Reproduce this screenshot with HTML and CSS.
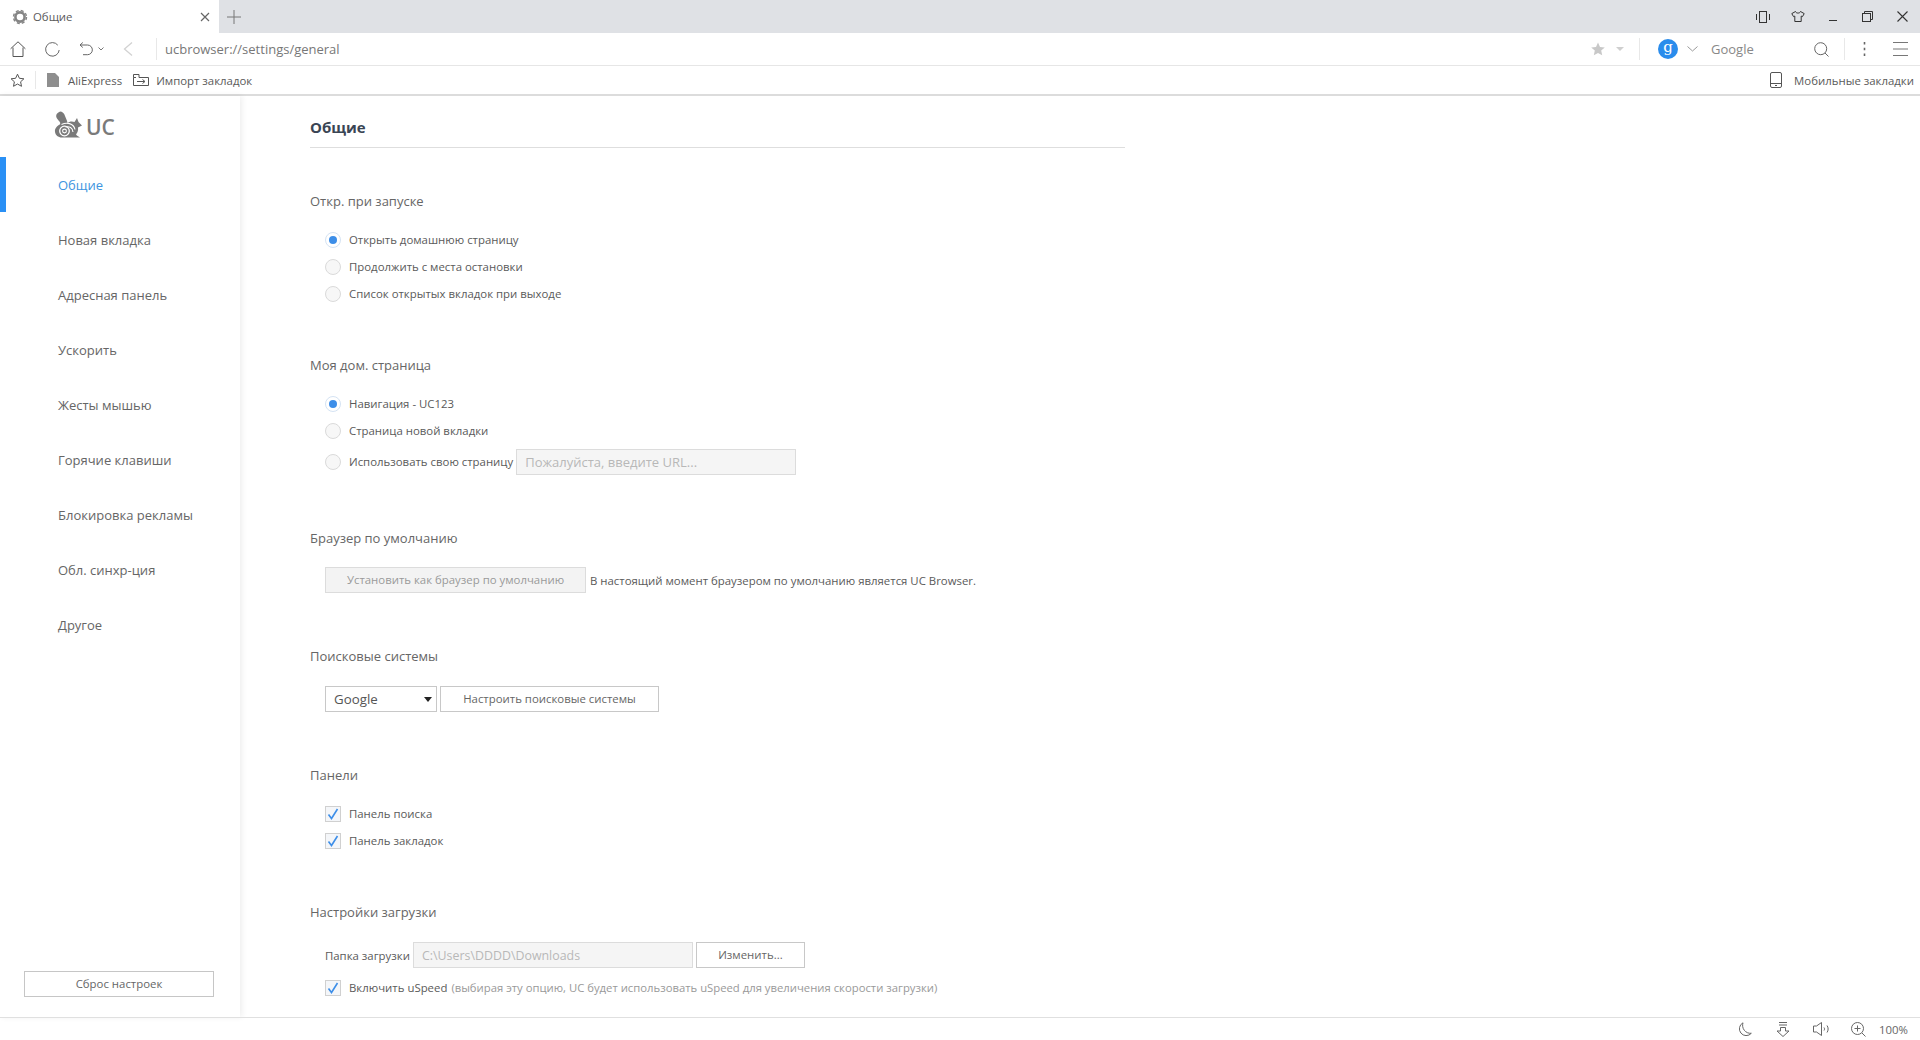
FILE: index.html
```html
<!DOCTYPE html>
<html lang="ru">
<head>
<meta charset="utf-8">
<title>Общие</title>
<link rel="stylesheet" href="styles.css">
</head>
<body>
<div class="tabbar">
  <div class="tab">
    <svg class="tab-gear" width="16" height="16" viewBox="0 0 16 16"><circle cx="8" cy="8" r="4.600" fill="none" stroke="#858585" stroke-width="2.600"/><circle cx="8" cy="8" r="6.500" fill="none" stroke="#858585" stroke-width="1.400" stroke-dasharray="3 2.100"/></svg>
    <span class="tab-title">Общие</span>
    <svg class="tab-close" width="10" height="10" viewBox="0 0 10 10"><path d="M1 1l8 8M9 1l-8 8" stroke="#666" stroke-width="1.200" fill="none"/></svg>
  </div>
  <svg class="tab-new" width="14" height="14" viewBox="0 0 14 14"><path d="M7 0v14M0 7h14" stroke="#777" fill="none"/></svg>
  <div class="win-controls">
    <span class="win-slot"><svg width="14" height="12" viewBox="0 0 14 12"><path d="M.5 3v6M13.500 3v6" stroke="#333" fill="none"/><rect x="3.500" y=".5" width="7" height="11" fill="none" stroke="#333"/></svg></span>
    <span class="win-slot"><svg width="14" height="12" viewBox="0 0 14 12"><path d="M4.500.5L.8 2.600l1.700 3 1.300-.5v5.400h6.400V5.100l1.300.5 1.700-3L9.500.5C9 2.600 5 2.600 4.500.5z" fill="none" stroke="#333"/></svg></span>
    <span class="win-slot"><svg width="10" height="10" viewBox="0 0 10 10"><path d="M1 8.500h8" stroke="#333" fill="none"/></svg></span>
    <span class="win-slot"><svg width="11" height="11" viewBox="0 0 11 11"><rect x=".5" y="2.500" width="8" height="8" fill="none" stroke="#333"/><path d="M2.500 2.500v-2h8v8h-2" fill="none" stroke="#333"/></svg></span>
    <span class="win-slot"><svg width="11" height="11" viewBox="0 0 11 11"><path d="M.5.500l10 10M10.500.500l-10 10" fill="none" stroke="#333" stroke-width="1.100"/></svg></span>
  </div>
</div>

<div class="toolbar">
  <span class="tool home"><svg width="16" height="16" viewBox="0 0 16 16"><path d="M.6 7.800L8 .8l7.400 7M3 6.500v9h10v-9" fill="none" stroke="#555"/></svg></span>
  <span class="tool reload"><svg width="15" height="15" viewBox="0 0 15 15"><path d="M12.800 3.200A6.800 6.800 0 1 0 14.200 8" fill="none" stroke="#666"/></svg></span>
  <span class="tool undo"><svg width="14" height="14" viewBox="0 0 14 14"><path d="M1 3h7.500a4.800 4.800 0 0 1 0 9.700H4M3.800.500L1 3l2.800 2.500" fill="none" stroke="#666"/></svg></span>
  <span class="tool undo-more"><svg width="6" height="4" viewBox="0 0 6 4"><path d="M.5.500L3 3l2.500-2.500" fill="none" stroke="#777"/></svg></span>
  <span class="tool back"><svg width="10" height="14" viewBox="0 0 10 14"><path d="M9 .5L1.500 7 9 13.500" fill="none" stroke="#d2d2d2" stroke-width="1.300"/></svg></span>
  <span class="divider tall"></span>
  <span class="url">ucbrowser://settings/general</span>
  <span class="tool fav"><svg width="14" height="14" viewBox="0 0 14 14"><path d="M7 .5l2 4.400 4.800.5-3.600 3.200 1 4.700L7 11l-4.200 2.300 1-4.700L.2 5.400 5 4.900z" fill="#c8c8c8"/></svg></span>
  <span class="tool fav-more"><svg width="8" height="4" viewBox="0 0 8 4"><path d="M0 0h8L4 4z" fill="#cfcfcf"/></svg></span>
  <span class="divider tall gap-engine"></span>
  <span class="engine">g</span>
  <span class="tool engine-more"><svg width="11" height="6" viewBox="0 0 11 6"><path d="M.5.500l5 4.500 5-4.500" fill="none" stroke="#999"/></svg></span>
  <span class="search-text">Google</span>
  <span class="tool search"><svg width="15" height="15" viewBox="0 0 15 15"><circle cx="6.700" cy="6.700" r="6" fill="none" stroke="#666"/><path d="M11 11l3.500 3.500" stroke="#666" fill="none"/></svg></span>
  <span class="divider tall"></span>
  <span class="tool dots"><svg width="3" height="14" viewBox="0 0 3 14"><path d="M1.500 0v2.500M1.500 5.700v2.500M1.500 11.500V14" stroke="#666" stroke-width="1.600" fill="none"/></svg></span>
  <span class="tool menu"><svg width="15" height="14" viewBox="0 0 15 14"><path d="M0 .5h15M0 7h15M0 13.500h15" stroke="#777" fill="none"/></svg></span>
</div>

<div class="bookmarks">
  <span class="tool bm-star"><svg width="15" height="15" viewBox="0 0 15 15"><path d="M7.500 1.200l1.900 4.100 4.500.5-3.300 3 .9 4.500-4-2.300-4 2.300.9-4.500-3.300-3 4.500-.5z" fill="none" stroke="#555"/></svg></span>
  <span class="divider short"></span>
  <svg class="bm-doc" width="12" height="14" viewBox="0 0 12 14"><path d="M0 0h8l4 4v10H0z" fill="#8e8e8e"/></svg>
  <span class="bm-label">AliExpress</span>
  <svg class="bm-import" width="16" height="12" viewBox="0 0 16 12"><path d="M.5 3.500V.5h5.500v3M.5 3.500h2.500M6 3.500h9.500v8H.5v-8M4 7.500h7.500M9.500 5.500l2.500 2-2.500 2" fill="none" stroke="#555"/></svg>
  <span class="bm-label">Импорт закладок</span>
  <svg class="bm-phone" width="12" height="16" viewBox="0 0 12 16"><rect x=".5" y=".5" width="11" height="15" rx="1.500" fill="none" stroke="#555"/><path d="M.5 11.500h11M5 13.500h2" stroke="#555" fill="none"/></svg>
  <span class="bm-label">Мобильные закладки</span>
</div>

<div class="main">
  <aside class="sidebar">
    <div class="logo">
      <svg width="28" height="28" viewBox="0 0 28 28"><path d="M7 .5C3 1 1 4.500 3 7.500 4.800 10 6.700 11 6.200 13.200 3.500 14.500.5 17 1 21c.5 3 3 5.500 7 5.500h18c-1.500-1.200-3.500-1.800-4-3.300 1.500-1.500 2.500-4 2-6.700l4-1.900-3.500-3.500L23 7 20.500 11c-2.500-1-5.500-.5-7 1C13 9 11.500 6.500 11 5 10.500 3 9 1 7 .5z" fill="#7a7a7a"/><circle cx="10.500" cy="20" r="4.800" fill="none" stroke="#fff" stroke-width="1.300"/><circle cx="10.500" cy="20" r="1.900" fill="none" stroke="#fff" stroke-width="1.100"/><path d="M7.500 13.500c5-2.500 12-1.500 13.500 5M11.500 16c4-1 7 .5 7.500 5" fill="none" stroke="#fff" stroke-width="1.100"/></svg>
      <span class="logo-text">UC</span>
    </div>
    <nav class="nav">
      <a class="nav-item active">Общие</a>
      <a class="nav-item">Новая вкладка</a>
      <a class="nav-item">Адресная панель</a>
      <a class="nav-item">Ускорить</a>
      <a class="nav-item">Жесты мышью</a>
      <a class="nav-item">Горячие клавиши</a>
      <a class="nav-item">Блокировка рекламы</a>
      <a class="nav-item">Обл. синхр-ция</a>
      <a class="nav-item">Другое</a>
    </nav>
    <button class="reset">Сброс настроек</button>
  </aside>

  <section class="content">
    <h1 class="page-title">Общие</h1>

    <div class="group g-start">
      <h2 class="group-title">Откр. при запуске</h2>
      <div class="row"><span class="radio on"></span><span class="label">Открыть домашнюю страницу</span></div>
      <div class="row"><span class="radio"></span><span class="label">Продолжить с места остановки</span></div>
      <div class="row"><span class="radio"></span><span class="label">Список открытых вкладок при выходе</span></div>
    </div>

    <div class="group g-home">
      <h2 class="group-title">Моя дом. страница</h2>
      <div class="row"><span class="radio on"></span><span class="label">Навигация - UC123</span></div>
      <div class="row"><span class="radio"></span><span class="label">Страница новой вкладки</span></div>
      <div class="row row-input"><span class="radio"></span><span class="label">Использовать свою страницу</span><span class="field url-field">Пожалуйста, введите URL...</span></div>
    </div>

    <div class="group g-default">
      <h2 class="group-title">Браузер по умолчанию</h2>
      <div class="row-ctl"><span class="btn disabled default-btn">Установить как браузер по умолчанию</span><span class="label note">В настоящий момент браузером по умолчанию является UC Browser.</span></div>
    </div>

    <div class="group g-search">
      <h2 class="group-title">Поисковые системы</h2>
      <div class="row-ctl"><span class="select">Google<svg width="8" height="5" viewBox="0 0 8 5"><path d="M0 0h8L4 5z" fill="#222"/></svg></span><span class="btn search-btn">Настроить поисковые системы</span></div>
    </div>

    <div class="group g-panels">
      <h2 class="group-title">Панели</h2>
      <div class="row"><span class="check"><svg width="12" height="12" viewBox="0 0 12 12"><path d="M1.500 6.500L4.500 10.500 10.500 1" fill="none" stroke="#3d8ee8" stroke-width="1.600"/></svg></span><span class="label">Панель поиска</span></div>
      <div class="row"><span class="check"><svg width="12" height="12" viewBox="0 0 12 12"><path d="M1.500 6.500L4.500 10.500 10.500 1" fill="none" stroke="#3d8ee8" stroke-width="1.600"/></svg></span><span class="label">Панель закладок</span></div>
    </div>

    <div class="group g-download">
      <h2 class="group-title">Настройки загрузки</h2>
      <div class="row-ctl"><span class="label">Папка загрузки</span><span class="field path-field">C:\Users\DDDD\Downloads</span><span class="btn change-btn">Изменить...</span></div>
      <div class="row row-speed"><span class="check"><svg width="12" height="12" viewBox="0 0 12 12"><path d="M1.500 6.500L4.500 10.500 10.500 1" fill="none" stroke="#3d8ee8" stroke-width="1.600"/></svg></span><span class="label">Включить uSpeed</span><span class="hint">(выбирая эту опцию, UC будет использовать uSpeed для увеличения скорости загрузки)</span></div>
    </div>
  </section>
</div>

<footer class="status">
  <span class="st-icon st-moon"><svg width="15" height="15" viewBox="0 0 15 15"><path d="M6 .8a6.800 6.800 0 1 0 8.300 10.500A8 8 0 0 1 6 .8z" fill="none" stroke="#666"/></svg></span>
  <span class="st-icon st-down"><svg width="14" height="15" viewBox="0 0 14 15"><path d="M3 .5h8M3 3h8M4.500 5.500h5v3.500h3.500L7 14.500 1 9h3.500z" fill="none" stroke="#666"/></svg></span>
  <span class="st-icon st-sound"><svg width="18" height="14" viewBox="0 0 18 14"><path d="M.5 4v6h3l5 3.500V.5l-5 3.500z" fill="none" stroke="#666"/><path d="M11 5.500c.7 1 .7 2 0 3M14 3.500c1.500 2 1.500 5 0 7" fill="none" stroke="#666"/></svg></span>
  <span class="st-icon st-plus"><svg width="15" height="15" viewBox="0 0 15 15"><circle cx="6.500" cy="6.500" r="6" fill="none" stroke="#666"/><path d="M6.500 3.500v6M3.500 6.500h6M11 11l3.500 3.500" stroke="#666" fill="none"/></svg></span>
  <span class="st-zoom">100%</span>
</footer>
</body>
</html>
```

FILE: styles.css
```css
* { box-sizing: border-box; }
html, body { margin: 0; padding: 0; height: 100%; }
body { font-family: "Open Sans", "Noto Sans", sans-serif; font-size: 11.4px; color: #5a5a5a; background: #fff; width: 1920px; height: 1040px; overflow: hidden; display: flex; flex-direction: column; }
svg { display: block; flex: none; }

.tabbar { height: 33px; background: #dfe1e5; display: flex; align-items: center; flex: none; }
.tab { width: 219px; height: 33px; background: #fff; display: flex; align-items: center; padding-left: 12px; }
.tab-title { margin-left: 5px; font-size: 11.4px; color: #5a5a5a; flex: 1; }
.tab-close { margin-right: 9px; }
.tab-new { margin-left: 8px; }
.win-controls { margin-left: auto; display: flex; align-items: center; }
.win-slot { width: 35px; display: flex; justify-content: center; }

.toolbar { height: 33px; flex: none; display: flex; align-items: center; border-bottom: 1px solid #e6e6e6; }
.tool { display: flex; justify-content: center; align-items: center; flex: none; }
.home { width: 36px; }
.reload { width: 32px; }
.undo { width: 36px; }
.undo-more { width: 6px; margin-left: -6px; }
.back { width: 38px; margin-left: 5px; margin-right: 9px; }
.divider { width: 1px; background: #e8e8e8; flex: none; }
.divider.tall { height: 22px; }
.url { margin-left: 8px; font-size: 13px; color: #777; flex: 1; }
.fav { width: 14px; }
.fav-more { width: 8px; margin-left: 11px; }
.gap-engine { margin-left: 15px; }
.engine { width: 20px; height: 20px; margin-left: 18px; border-radius: 50%; background: #2a8cec; color: #fff; font-size: 15px; line-height: 16px; text-align: center; font-family: "DejaVu Serif", serif; flex: none; }
.engine-more { width: 11px; margin-left: 9px; }
.search-text { margin-left: 13px; width: 103px; font-size: 13px; color: #888; }
.search { width: 15px; }
.toolbar .search + .divider { margin-left: 15px; }
.dots { width: 3px; margin-left: 18px; }
.menu { width: 15px; margin-left: 27px; margin-right: 12px; }

.bookmarks { height: 30px; flex: none; display: flex; align-items: center; border-bottom: 2px solid #dcdcdc; }
.bm-star { width: 15px; margin-left: 10px; }
.divider.short { height: 18px; margin-left: 10px; }
.bm-doc { margin-left: 11px; }
.bm-label { font-size: 11.4px; color: #5a5a5a; margin-left: 9px; }
.bm-import { margin-left: 11px; }
.bm-import + .bm-label { margin-left: 7px; }
.bm-phone { margin-left: auto; }
.bm-phone + .bm-label { margin-left: 12px; margin-right: 6px; }

.main { flex: 1; display: flex; min-height: 0; }
.sidebar { width: 240px; flex: none; display: flex; flex-direction: column; box-shadow: 2px 0 6px rgba(0,0,0,.07); }
.logo { height: 61px; display: flex; align-items: center; padding: 0 0 4px 54px; }
.logo-text { margin: 6px 0 0 4px; font-size: 21px; font-weight: 600; color: #7a7a7a; line-height: 1; }
.nav { display: flex; flex-direction: column; }
.nav-item { height: 55px; display: flex; align-items: center; padding-left: 58px; font-size: 13px; color: #666; }
.nav-item.active { color: #3d94e0; box-shadow: inset 6px 0 0 #2a90f5; }
.reset { margin: auto 26px 20px 24px; height: 26px; border: 1px solid #c6c6c6; background: #fff; font: inherit; font-size: 11.4px; color: #666; padding: 0 0 2px; }

.content { flex: 1; padding-left: 70px; min-width: 0; }
.page-title { width: 815px; height: 52px; margin: 0; padding-top: 21px; font-size: 15px; line-height: 21px; font-weight: 700; color: #3a4554; border-bottom: 1px solid #dedede; }
.group-title { margin: 0 0 15px; font-size: 13px; line-height: 20px; font-weight: 400; color: #666; }
.g-start { margin-top: 43px; }
.g-home { margin-top: 48px; }
.g-default { margin-top: 49px; }
.g-default .group-title { margin-bottom: 19px; }
.g-search { margin-top: 53px; }
.g-search .group-title { margin-bottom: 20px; }
.g-panels { margin-top: 53px; }
.g-download { margin-top: 48px; }
.g-download .group-title { margin-bottom: 20px; }
.row { height: 27px; display: flex; align-items: center; padding-left: 15px; }
.row-input { height: 35px; }
.row-speed { margin-top: 6px; }
.row-ctl { display: flex; align-items: center; padding-left: 15px; gap: 3px; }
.radio { width: 16px; height: 16px; border-radius: 50%; border: 1px solid #dadada; background: #f7f7f7; flex: none; margin-right: 8px; display: flex; align-items: center; justify-content: center; }
.radio.on { background: #fff; border-color: #d5e3f3; }
.radio.on::after { content: ""; width: 8px; height: 8px; border-radius: 50%; background: #3d8ee8; }
.check { width: 16px; height: 16px; border: 1px solid #d0d0d0; background: #f4f6f9; flex: none; margin-right: 8px; display: flex; align-items: center; justify-content: center; }
.label { font-size: 11.4px; color: #5a5a5a; white-space: nowrap; }
.note { margin-left: 1px; }
.hint { margin-left: 4px; font-size: 11.3px; color: #999; white-space: nowrap; }
.field { height: 26px; background: #f5f5f5; border: 1px solid #dcdcdc; color: #b8b8b8; display: flex; align-items: center; padding-left: 8px; }
.url-field { width: 280px; margin-left: 3px; font-size: 13px; }
.path-field { width: 280px; font-size: 12.4px; }
.btn { height: 26px; display: flex; align-items: center; justify-content: center; border: 1px solid #c8c8c8; background: #fff; color: #666; font-size: 11.4px; white-space: nowrap; padding-bottom: 2px; }
.btn.disabled { background: #f3f3f3; border-color: #dcdcdc; color: #9a9a9a; }
.default-btn { width: 261px; }
.search-btn { width: 219px; }
.change-btn { width: 109px; }
.select { width: 112px; height: 26px; border: 1px solid #c8c8c8; display: flex; align-items: center; justify-content: space-between; padding: 0 4px 0 8px; font-size: 13.3px; color: #555; }

.status { height: 23px; flex: none; border-top: 1px solid #e0e0e0; display: flex; align-items: center; justify-content: flex-end; }
.st-icon { display: flex; justify-content: center; }
.st-moon { width: 38px; }
.st-down { width: 40px; }
.st-sound { width: 38px; }
.st-plus { width: 34px; }
.st-zoom { font-size: 11.4px; color: #666; margin: 0 12px 0 4px; }
```
